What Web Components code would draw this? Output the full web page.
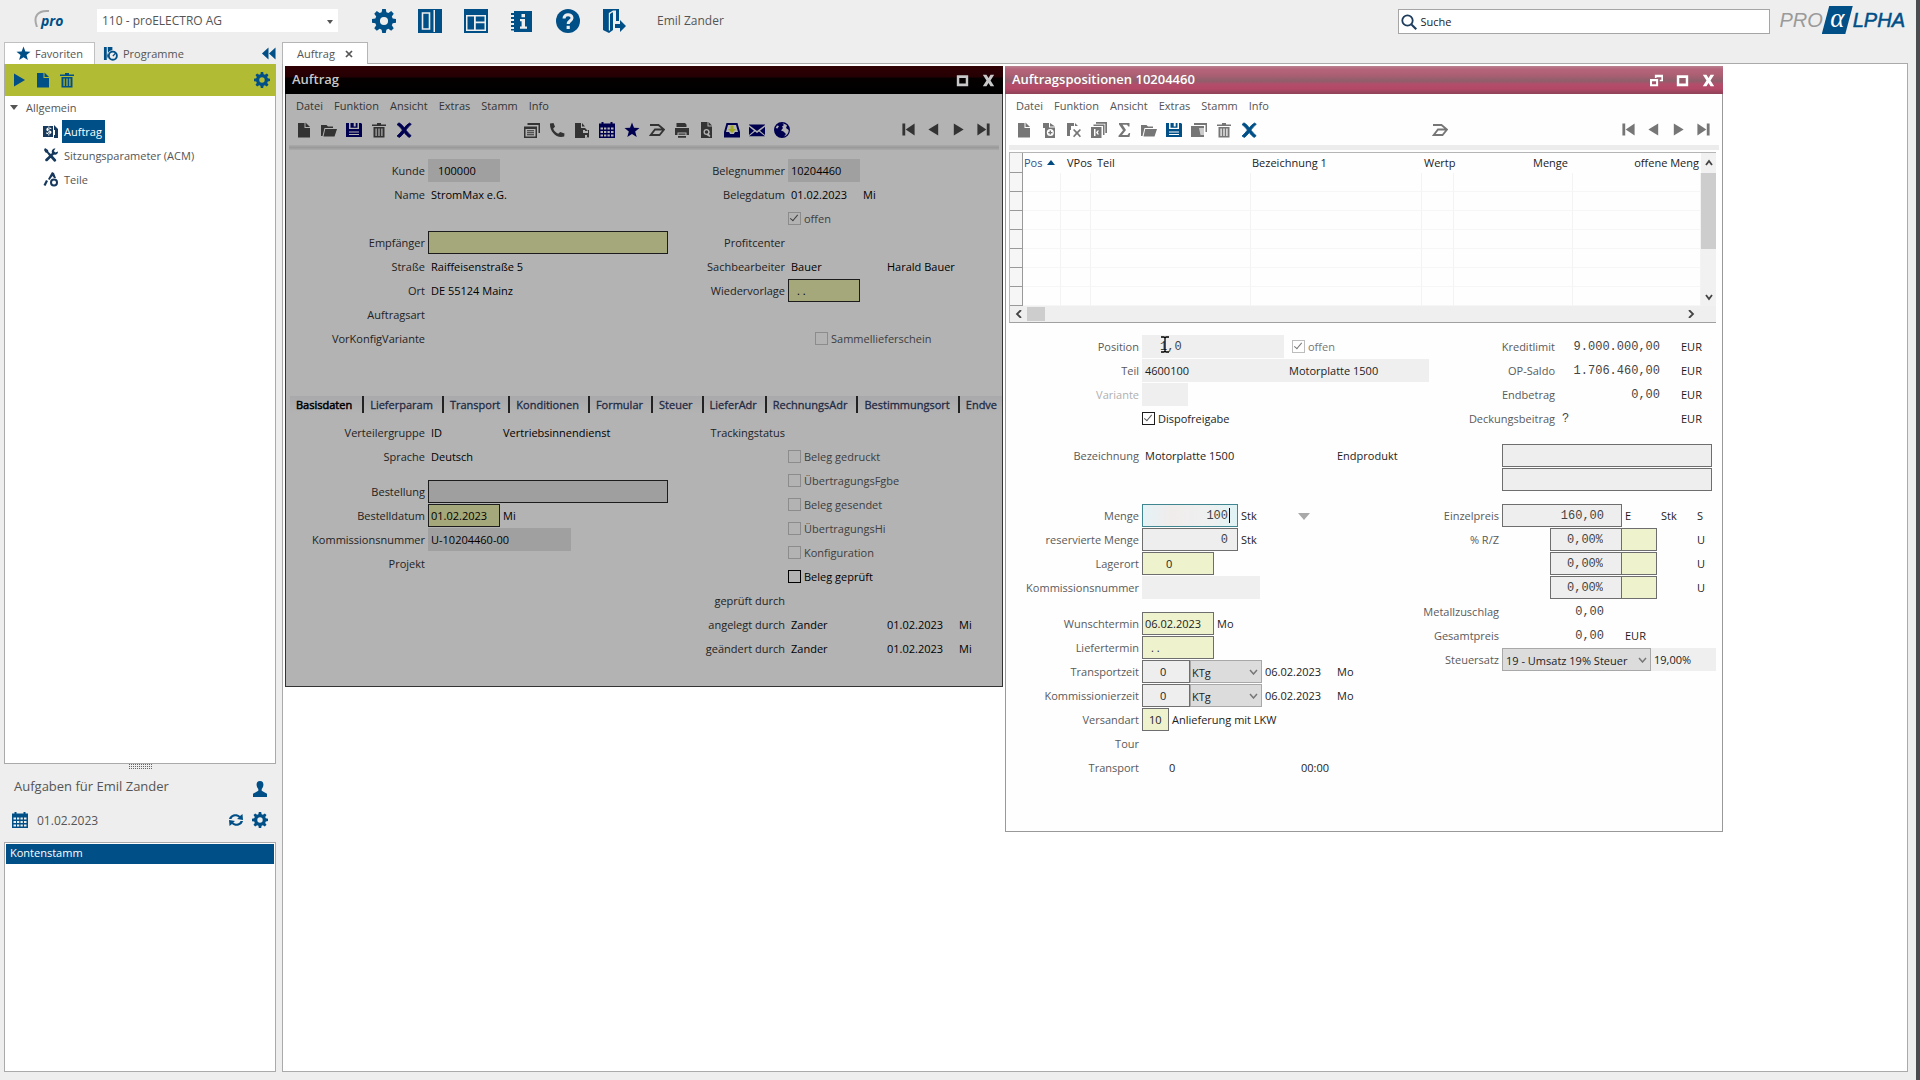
<!DOCTYPE html>
<html lang="de">
<head>
<meta charset="utf-8">
<title>proALPHA – Auftrag</title>
<style>
  html, body { height: 100%; }
  body { margin: 0; background: #eeeeee; font-family: "Open Sans", "Noto Sans", sans-serif; font-size: 11px; color: #444; }
</style>
</head>
<body>
<pa-app></pa-app>

<script>
const BASE = `
  *, *::before, *::after { box-sizing: border-box; }
  button { appearance: none; border: 0; background: none; padding: 0; margin: 0; font: inherit; color: inherit; display: inline-flex; align-items: center; justify-content: center; cursor: default; }
`;

function define(name, html, setup) {
  const tpl = document.createElement('template');
  customElements.define(name, class extends HTMLElement {
    connectedCallback() {
      if (this.shadowRoot) return;
      const root = this.attachShadow({ mode: 'open' });
      tpl.innerHTML = typeof html === 'function' ? html(this) : html;
      root.append(tpl.content.cloneNode(true));
      if (setup) setup(this, root);
    }
  });
}

/* ---------- icons, drawn on a 16 unit grid ---------- */
const GEAR = '<path fill-rule="evenodd" d="M6.8 0h2.4l.4 2.2 1.3.5 1.9-1.3 1.7 1.7-1.3 1.9.6 1.3 2.2.4v2.4l-2.2.4-.6 1.4 1.3 1.9-1.7 1.7-1.9-1.3-1.3.6-.4 2.2H6.8l-.4-2.2-1.3-.6-1.9 1.3-1.7-1.7 1.3-1.9-.6-1.4L0 9.200V6.700l2.200-.4.6-1.300-1.300-1.900 1.700-1.700 1.900 1.300 1.300-.5zM8 5.300a2.700 2.700 0 1 0 0 5.400 2.700 2.700 0 0 0 0-5.400z"/>';
const TRASH = '<path fill-rule="evenodd" d="M6 1h4v1.500h5V4H1V2.500h5zM2.500 5h11v10.500h-11zM4.500 6.500v7.500h1.200V6.500zM7.400 6.500v7.500h1.200V6.500zM10.300 6.500v7.500h1.200V6.500z"/>';
const PAGE = '<path d="M2 1h6.500v5H14v9.500H2z"/><path d="M9.500 0.500l4.500 4.500H9.500z"/>';
const ICONS = {
  gear: GEAR,
  trash: TRASH,
  page: PAGE,
  play: '<path d="M3 1.500l11 6.500-11 6.500z"/>',
  star: '<path d="M8 .5l2 5.300 5.500.2-4.300 3.500 1.500 5.500L8 11.900 3.300 15l1.500-5.500L.5 6l5.500-.2z"/>',
  book: '<path d="M0 0h24v24H0z"/><path fill="none" stroke="#eee" stroke-width="1.600" d="M4.500 4h7v16h-7z"/><path fill="#eee" d="M15.500 1H17v22h-1.500z"/>',
  layout: '<path d="M0 0h24v24H0z"/><path fill="#eee" d="M2 6h20v1.600H2zM2 6h1.500v16H2zM20.500 6H22v16h-1.500zM2 20.500h20V22H2zM10 6h1.800v16H10zM10 12.500h12v1.800H10z"/>',
  info: '<path d="M4 2h18v21H4zM1 4h5v2H1zM1 8h5v2H1zM1 12h5v2H1zM1 16h5v2H1zM1 20h5v1.500H1z"/><path fill="#eee" d="M11.500 5h3.500v3.200h-3.500zM10 10h5v7.500h2v2.200h-7v-2.200h1.600v-5.200H10z"/>',
  help: '<circle cx="12" cy="12" r="12"/><path fill="none" stroke="#eee" stroke-width="3" d="M8 9.500c0-5 8-5 8-.5 0 2.800-3.800 2.800-3.800 6"/><path fill="#eee" d="M10.600 16.800h3.200V20h-3.200z"/>',
  exit: '<path d="M1 0h16v3H11v18l-4 3-6-3z"/><path fill="#eee" d="M10 3.500l-2 1.500v16.500h-1.200V4L11 1.500h4V3z"/><path d="M14 1h3v11h-3zM13 15h5v-4l6 6-6 6v-4h-5z"/>',
  programs: '<path d="M1 1h3v14H1zM5 1h5v3.500A6 6 0 0 0 5.500 14z"/><path fill-rule="evenodd" d="M10.500 5a5.300 5.300 0 1 1 0 10.600 5.300 5.300 0 0 1 0-10.600zm0 2a3.300 3.300 0 1 0 0 6.600 3.300 3.300 0 0 0 0-6.600z"/><path d="M10 10.500l3-3.500 1 1-3 3.200z"/>',
  collapse: '<path d="M8 1.500v13L1 8zM15.500 1.500v13L8.500 8z"/>',
  order: '<path d="M0 3h10v11H0zM11 2l4 4v9h-4V12h1V7h-1z"/><path fill="#fff" d="M8.300 6.200V5.100c-1.400-.8-5-.9-5 1.300 0 2.300 3.600 1.500 3.600 2.800 0 1-2.100.8-3.600.1v1.500c1.800.7 5.200.7 5.200-1.700 0-2.200-3.600-1.700-3.600-2.700 0-.9 2-.7 3.400-.2zM5.300 3.500h1v9h-1z"/>',
  tools: '<path d="M2 1l3 2 .5 2L9 8l4 4.500c1 1-1 3-2 2L7 10 4 6 2.500 5.500 1 3zM15 4.500c.3 2-2 4-4 3L4.500 14c-1.200 1.200-3.300-.8-2-2L9 6c-1-3 1.500-5 3.500-4.500L10.800 4l1.500 1.500z"/>',
  parts: '<path d="M.5 14l2.500-5 2 1-2.500 5zM5 8l4-7 2 1 2 5h-2L9.500 5 6.500 9z"/><path fill-rule="evenodd" d="M11 7.500a4 4 0 1 1 0 8 4 4 0 0 1 0-8zm0 2a2 2 0 1 0 0 4 2 2 0 0 0 0-4z"/>',
  folder: '<path d="M0 3h5.500L7 4.500h5V6H3.500L1.500 14H0z"/><path d="M4.200 7H16l-2.500 7.500h-11z"/>',
  save: '<path fill-rule="evenodd" d="M0 1h3v6h10V1h2l1 1v13H0zM4.500 1h3.200v3.500h2V1h1.800v4.800h-7zM3 9.500v1h10v-1zM3 12v1h10v-1z"/>',
  cross: '<path d="M1 2.500L3 .8C5.200 2 7 4 8.300 5.800 9.800 3.800 11.500 2.200 13.500 1l1.800 1.300C13.200 4 11.300 6 9.900 8.100c1.400 1.900 3.200 3.900 5.300 5.600l-2 1.800c-1.900-1.300-3.600-3.100-5-5-1.400 1.900-3 3.700-4.800 5L1 14c2.100-1.800 4-3.800 5.400-5.900C5 6 3.200 4.100 1 2.500z" stroke="currentColor" stroke-width=".8"/>',
  list: '<path fill-rule="evenodd" d="M3.500 1H16v10h-1.500V3h-11zM0 4.500h13V16H0zM1.500 7v7.500h10V7z"/><path d="M3 8.200h7v1H3zM3 10.200h7v1H3zM3 12.200h7v1H3z"/>',
  phone: '<path d="M1 1.500L4.500 1 6 4.800 4.200 6.500c.7 2.300 2.500 4.200 5 5.200l2-1.700 4.300 1.500-.3 3C7.500 17 .5 9.500 1 1.500z"/>',
  pageinfo: '<path d="M1 1h6v5h4v2H9v3h2v5H1z"/><path d="M8 1l3 3.500H8zM11 6l3 3h-3zM14 8v3h-3v2h2v2h-2l4 .5V8z"/>',
  calendar: '<path fill-rule="evenodd" d="M2.500 0h2v1.500h7V0h2v1.500H16V16H0V1.500h2.500zM1.500 5.500v2H4v-2zM5 5.500v2h2.300v-2zM8.500 5.500v2h2.300v-2zM12 5.500v2h2.500v-2zM1.500 9v2H4V9zM5 9v2h2.300V9zM8.500 9v2h2.300V9zM12 9v2h2.500V9zM1.500 12.500v2H4v-2zM5 12.500v2h2.300v-2zM8.500 12.500v2h2.300v-2zM12 12.500v2h2.500v-2z"/>',
  scan: '<path fill="none" stroke="currentColor" stroke-width="1.800" d="M1 3h8.500l5.500 4.500L10.500 13H1.800L6 7.500h9"/>',
  print: '<path d="M4 1h7l1.500 1.500V5h-10V1zM1 6h14v7h-2.500v-2.500h-9V13H1zM4.500 11.500h7v1.300h-7zM4 14h8v1.800H4z"/>',
  pagefind: '<path fill-rule="evenodd" d="M2 0h6.500v4.500H13V16H2zM7.500 7a3 3 0 1 0 0 6l3 2 1-1-1.500-2a3 3 0 0 0-2.500-5zm0 1.300a1.700 1.700 0 1 1 0 3.400 1.700 1.700 0 0 1 0-3.400z"/><path d="M9.500 0L13 3.500H9.500z"/>',
  inbox: '<path fill-rule="evenodd" d="M2.500 1h11L16 10v5.500H0V10zM4 3L2 10h3l1.200 2h3.600L11 10h3l-2-7z"/><path fill="#a0a820" d="M6.500 3.500h3V7H12L8 11 4 7h2.500z"/>',
  mail: '<path d="M0 2.500h16V3l-8 6-8-6zM0 4.800l5 3.900L0 13zM16 4.800l-5 3.900 5 4.300zM0 14.300l6-4.900 2 1.500 2-1.500 6 4.900z"/>',
  globe: '<path fill-rule="evenodd" d="M8 0a8 8 0 1 1 0 16A8 8 0 0 1 8 0zm.5 1.500L10 3 8 4.500 9 6 7 8.500l2.500 1L12 12l-2 2.500c3-1 4.800-3.500 4.700-6.500L12 6l1-2.500C12 2.500 10.500 1.600 8.500 1.500zM3 3.500L1.700 6l1.800.5L5 4z"/>',
  first: '<path d="M1.500 1.500h3v13h-3zM14.500 1.500v13L5 8z"/>',
  prev: '<path d="M13 1.500v13L2.500 8z"/>',
  next: '<path d="M3 1.500v13L13.500 8z"/>',
  last: '<path d="M11.500 1.500h3v13h-3zM1.500 1.500v13L11 8z"/>',
  pageadd: '<path fill-rule="evenodd" d="M2 1h6v4.500h6V16H4V6H2zM9.300 7a3.500 3.500 0 1 0 0 7 3.500 3.500 0 0 0 0-7zM8.600 8.500H10v1.400h1.400v1.300H10v1.400H8.600v-1.400H7.200V9.900h1.400z"/><path d="M9 1l5 3.500H9z"/>',
  pagecut: '<path d="M1 1h7v3H5v4H4v6H1zM9 1l3 3H9z"/><path d="M7 8l1.200-1 2.800 2.800L13.800 7 15 8l-2.800 3 2.800 3.200-1.200 1-2.800-3-2.800 3-1.200-1L9.800 11z"/>',
  pagecopy: '<path fill-rule="evenodd" d="M5 0h11v11h-1.700V1.800H5zM2.500 2.500h11v10.500h-1.500V4h-9.500zM0 5h10.500v11H0zm3 2v7h1.500V7zm3.500 1.500L5 10.500 6.500 12.500H8L6.800 10.500 8 8.500z"/>',
  sigma: '<path d="M3 1h10.500v3.500h-1.200L11 2.800H6.500L10 8l-4 5h5.500l1.500-2h1.200l-.7 4H2.500v-1.300L7 8.300 3 2.500z"/>',
  folders: '<path d="M3 1h13v9h-1.500V3H3z"/><path d="M0 4h13v11H0z"/><path fill="#ccc" d="M8 6h5v7H9.500z"/>',
  person: '<path d="M8 0c4.500 0 4 5.500 1.700 8v1.800l5.300 3V16H1v-3.200l5.300-3V8C4 5.500 3.500 0 8 0z"/>',
  sync: '<path d="M1 7C2 2 9 .8 12 4l2.500-2 .5 6-6-1 1.800-1.600C8 3.400 4.500 4 3.500 7zM15 9c-1 5-8 6.200-11 3l-2.500 2L1 8l6 1-1.800 1.600C8 12.600 11.500 12 12.500 9z"/>',
  restore: '<path fill-rule="evenodd" d="M0 6h10v9H0zm2.500 3v3.500h5V9z"/><path d="M6 1h10v8h-4V7h2V4H8v1H6z"/>',
  max: '<path fill-rule="evenodd" d="M1 1.500h14v13.500H1zM4 4.800v7h8v-7z"/>',
  close: '<path d="M1 1h4.500L8 5l2.500-4H15l-4.500 7 4.500 7h-4.500L8 11l-2.500 4H1l4.500-7z"/>',
  lens: '<circle cx="6.500" cy="6.500" r="5.200" fill="none" stroke="currentColor" stroke-width="1.800"/><path d="M9.800 11.200l1.400-1.400 4.800 4.600-1.500 1.600z"/>',
  small: '<path fill="none" stroke="currentColor" stroke-width="3.500" d="M2 2l12 12M14 2L2 14"/>'
};
const BIG = new Set(['book', 'layout', 'info', 'help', 'exit']);

define('pa-icon', el => `
  <style>:host { display: inline-block; width: var(--size, 16px); height: var(--size, 16px); flex: none; }
  svg { display: block; width: 100%; height: 100%; fill: currentColor; }</style>
  <svg viewBox="0 0 ${BIG.has(el.getAttribute('name')) ? '24 24' : '16 16'}" aria-hidden="true">${ICONS[el.getAttribute('name')] || ''}</svg>`);

/* ---------- form parts ---------- */
define('pa-field', el => {
  const has = el.hasAttribute('value');
  const label = el.getAttribute('label') || '';
  return `
  <style>${BASE}
    :host { display: flex; align-items: flex-start; height: 24px; line-height: 23px; white-space: nowrap; }
    .label { width: var(--label-w); flex: none; margin-right: 3px; display: flex; justify-content: flex-end; color: var(--label); }
    :host([off]) .label { color: #b0b0b0; }
    input { height: 23px; width: var(--w, 72px); margin: 0 0 0 var(--lead, 0px); padding: 0 2px; border: 1px solid var(--line); border-radius: 0; background: var(--grey); font: inherit; color: var(--ink); outline: 0; flex: none; padding-left: var(--pl, 2px); }
    input.flat { border: 0; padding-left: var(--pl, 3px); }
    input.yellow { background: var(--yellow); }
    input.mono { font-family: "Liberation Mono", monospace; font-size: 12px; padding-top: 2px; color: #444; }
    input.right { text-align: right; padding-right: var(--pr, 9px); }
    input.focus { border-color: #3f8690; background: linear-gradient(90deg, #e4f2f5, #f1ecec 30%, #eef0f0 70%, #e0f3f5); }
    ::slotted(span) { min-width: var(--w, 0px); padding-left: 3px; color: var(--ink); flex: none; }
    ::slotted(.num) { font-family: "Liberation Mono", monospace; font-size: 12px; text-align: right; padding-right: 18px; padding-top: 1px; color: #444; }
    ::slotted(.numl) { font-family: "Liberation Mono", monospace; font-size: 12px; padding-left: 4px; padding-top: 1px; color: #444; }
    ::slotted(.tint) { background: var(--flat); height: 23px; }
    ::slotted(input) { height: 23px; width: 36px; margin: 0 0 0 -1px; box-sizing: border-box; border: 1px solid var(--line); background: var(--yellow); flex: none; }
    .box { position: relative; display: flex; }
    .caret { position: absolute; right: 8px; top: 4px; width: 1px; height: 15px; background: #000; }
    .beam { position: absolute; left: 19px; top: 1px; width: 8px; height: 17px; }
  </style>
  ${has
    ? `<label class="label" for="i">${label}</label><span class="box"><input id="i" class="${el.getAttribute('tone') || ''}" value="${el.getAttribute('value')}" ${el.hasAttribute('ro') ? 'readonly' : ''}>${el.hasAttribute('caret') ? '<span class="caret"></span>' : ''}${el.hasAttribute('beam') ? '<svg class="beam" viewBox="0 0 8 17"><path d="M0 1h3l1 1 1-1h3M0 16h3l1-1 1 1h3M4 2v13" fill="none" stroke="#000" stroke-width="1.300"/></svg>' : ''}</span>`
    : `<span class="label">${label}</span>`}
  <slot></slot>`;
});

define('pa-check', el => `
  <style>${BASE}
    :host { display: flex; height: 23px; align-items: center; margin-left: var(--lead, 0px); }
    label { display: flex; align-items: center; gap: 3px; color: var(--ink); }
    :host([off]) label { color: var(--off); }
    input { appearance: none; width: 13px; height: 13px; margin: 0; border: 1px solid var(--ink); position: relative; flex: none; }
    :host([off]) input { border-color: var(--offline); }
    input:checked::before { content: ""; position: absolute; left: 3px; top: 0; width: 4px; height: 8px; border: solid var(--label); border-width: 0 1px 1px 0; transform: rotate(40deg); }
    :host([off]) input:checked::before { border-color: var(--off); }
  </style>
  <label><input type="checkbox" ${el.hasAttribute('checked') ? 'checked' : ''} ${el.hasAttribute('off') ? 'disabled' : ''}><slot></slot></label>`);

define('pa-select', el => `
  <style>${BASE}
    :host { display: flex; position: relative; width: var(--w); flex: none; height: var(--h, 23px); }
    select { appearance: none; width: 100%; height: 100%; border: 1px solid var(--edge, #a8a8a8); border-radius: 0; background: var(--fill, #dcdcdc); font: inherit; color: inherit; padding: 0 16px 0 var(--pl, 4px); margin: 0; opacity: 1; }
    svg { position: absolute; right: 4px; top: 50%; width: 9px; height: 6px; margin-top: -3px; fill: none; stroke: #777; stroke-width: 1.500; pointer-events: none; }
    .solid { fill: #555; stroke: none; width: 6px; height: 4px; margin-top: -1px; right: 5px; }
  </style>
  <select aria-label="${el.getAttribute('name')}"><option>${el.getAttribute('value')}</option></select>
  ${el.hasAttribute('solid') ? '<svg class="solid" viewBox="0 0 6 4"><path d="M0 0h6L3 4z"/></svg>' : '<svg viewBox="0 0 9 6"><path d="M1 1l3.500 4L8 1"/></svg>'}`);

/* ---------- window frame ---------- */
define('pa-window', el => {
  const tools = (el.getAttribute('tools') || '').split(' ').filter(Boolean);
  const mid = (el.getAttribute('mid') || '').split(' ').filter(Boolean);
  const strong = new Set((el.getAttribute('strong') || '').split(' '));
  const btn = n => `<button aria-label="${n}" class="${strong.has(n) ? 's' : ''}"><pa-icon name="${n}"></pa-icon></button>`;
  return `
  <style>${BASE}
    :host { display: flex; flex-direction: column; width: 718px; border: 1px solid var(--frame); border-top: 0; background: var(--paper); flex: none; }
    header { display: flex; align-items: center; height: 28px; margin: 0 -1px; padding: 0 8px 0 7px; background: var(--title); color: var(--title-ink); }
    h2 { margin: 0; flex: 1; font-size: 13px; font-weight: 600; line-height: 24px; height: 26px; }
    header div { display: flex; gap: 13px; --size: 13px; }
    nav { display: flex; height: 22px; padding: 0 10px; align-items: center; gap: 11px; color: var(--menu); }
    .bar { display: flex; align-items: center; height: 27px; margin-bottom: 2px; padding: 0 6px 0 5px; color: var(--tool); --size: 16px; }
    .bar div { display: flex; }
    .bar button { width: 25px; height: 25px; }
    .mid { margin-left: var(--mid-gap); }
    .bar div:last-child { margin-left: auto; --size: 15px; }
    .s { color: var(--strong); }
    hr { width: calc(100% - 6px); height: 5px; border: 0; margin: 0 3px; background: var(--rule); }
  </style>
  <header><h2>${el.getAttribute('heading')}</h2><div>${el.hasAttribute('restore') ? '<button aria-label="Wiederherstellen"><pa-icon name="restore"></pa-icon></button>' : ''}<button aria-label="Maximieren"><pa-icon name="max"></pa-icon></button><button aria-label="Schließen"><pa-icon name="close"></pa-icon></button></div></header>
  <nav>${['Datei', 'Funktion', 'Ansicht', 'Extras', 'Stamm', 'Info'].map(t => `<button>${t}</button>`).join('')}</nav>
  <div class="bar"><div>${tools.map(btn).join('')}</div><div class="mid">${mid.map(btn).join('')}</div><div>${['first', 'prev', 'next', 'last'].map(btn).join('')}</div></div>
  <hr>
  <slot></slot>`;
});

/* ---------- order form ---------- */
define('pa-order-form', `
  <style>${BASE}
    :host { display: block; padding: 9px 0 25px 1px; }
    .cols { display: grid; grid-template-columns: 382px 1fr; }
    .a { --label-w: 138px; } .b { --label-w: 116px; }
    .skip { height: 24px; } .gap { height: 11px; }
    .tabs { display: flex; margin: 45px 0 8px 3px; overflow: hidden; height: 17px; align-items: center; color: #1f2a44; background: linear-gradient(#a9a9ab, #b3b3b3); -webkit-text-stroke: .3px #1f2a44; }
    .tabs button { padding: 0 8px 0 6px; height: 17px; border-left: 2px solid #222; flex: none; white-space: nowrap; }
    .tabs button:first-child { border: 0; padding-right: 10px; color: #000; -webkit-text-stroke: .5px #000; }
    .tabs button:nth-child(even) { padding-right: 9px; }
  </style>
  <section class="cols">
    <div class="a">
      <pa-field label="Kunde" value="100000" tone="flat" ro style="--pl:10px;--grey:var(--flat)"></pa-field>
      <pa-field label="Name"><span>StromMax e.G.</span></pa-field>
      <div class="skip"></div>
      <pa-field label="Empfänger" value="" tone="yellow" style="--w:240px"></pa-field>
      <pa-field label="Straße"><span>Raiffeisenstraße 5</span></pa-field>
      <pa-field label="Ort"><span>DE 55124 Mainz</span></pa-field>
      <pa-field label="Auftragsart"></pa-field>
      <pa-field label="VorKonfigVariante"></pa-field>
    </div>
    <div class="b">
      <pa-field label="Belegnummer" value="10204460" tone="flat" ro style="--grey:var(--flat)"></pa-field>
      <pa-field label="Belegdatum"><span style="--w:72px">01.02.2023</span><span>Mi</span></pa-field>
      <pa-field><pa-check checked off>offen</pa-check></pa-field>
      <pa-field label="Profitcenter"></pa-field>
      <pa-field label="Sachbearbeiter"><span style="--w:96px">Bauer</span><span>Harald Bauer</span></pa-field>
      <pa-field label="Wiedervorlage" value=". ." tone="yellow" style="--pl:8px"></pa-field>
      <div class="skip"></div>
      <pa-field><pa-check off style="--lead:27px">Sammellieferschein</pa-check></pa-field>
    </div>
  </section>
  <div class="tabs"><button>Basisdaten</button><button>Lieferparam</button><button>Transport</button><button>Konditionen</button><button>Formular</button><button>Steuer</button><button>LieferAdr</button><button>RechnungsAdr</button><button>Bestimmungsort</button><button>Endve</button></div>
  <section class="cols">
    <div class="a">
      <pa-field label="Verteilergruppe"><span style="--w:72px">ID</span><span>Vertriebsinnendienst</span></pa-field>
      <pa-field label="Sprache"><span>Deutsch</span></pa-field>
      <div class="gap"></div>
      <pa-field label="Bestellung" value="" style="--w:240px"></pa-field>
      <pa-field label="Bestelldatum" value="01.02.2023" tone="yellow"><span>Mi</span></pa-field>
      <pa-field label="Kommissionsnummer" value="U-10204460-00" tone="flat" ro style="--w:143px;--grey:var(--flat)"></pa-field>
      <pa-field label="Projekt"></pa-field>
    </div>
    <div class="b">
      <pa-field label="Trackingstatus"></pa-field>
      <pa-field><pa-check off>Beleg gedruckt</pa-check></pa-field>
      <pa-field><pa-check off>ÜbertragungsFgbe</pa-check></pa-field>
      <pa-field><pa-check off>Beleg gesendet</pa-check></pa-field>
      <pa-field><pa-check off>ÜbertragungsHi</pa-check></pa-field>
      <pa-field><pa-check off>Konfiguration</pa-check></pa-field>
      <pa-field><pa-check>Beleg geprüft</pa-check></pa-field>
      <pa-field label="geprüft durch"></pa-field>
      <pa-field label="angelegt durch"><span style="--w:96px">Zander</span><span style="--w:72px">01.02.2023</span><span>Mi</span></pa-field>
      <pa-field label="geändert durch"><span style="--w:96px">Zander</span><span style="--w:72px">01.02.2023</span><span>Mi</span></pa-field>
    </div>
  </section>`);

/* ---------- positions grid ---------- */
define('pa-positions', `
  <style>${BASE}
    :host { display: block; margin: 2px 6px 0 3px; border-bottom: 1px solid #a0a0a0; border-top: 1px solid #b5b5b5; border-left: 1px solid #bbb; }
    .top { display: flex; }
    .view { flex: 1; }
    table { width: 100%; table-layout: fixed; border-collapse: separate; border-spacing: 0; color: #222; }
    th { font-weight: 400; text-align: left; height: 20px; padding: 0 0 0 1px; white-space: nowrap; line-height: 18px; }
    th.r { text-align: right; padding-right: 5px; }
    th:nth-child(3) { padding-left: 6px; } th:nth-child(4) { padding-left: 6px; }
    th:nth-child(6) { padding-left: 2px; }
    th:nth-child(8) { padding-right: 2px; }
    td { height: 19px; padding: 0; border-bottom: 1px solid #f6f6f6; border-right: 1px solid #f3f3f3; }
    th:first-child, td:first-child { border-right: 1px solid #999; border-bottom: 1px solid #999; background: #f6f6f6; }
    .sort { color: #33508a; }
    .sort i { display: inline-block; border: 4px solid transparent; border-bottom: 5px solid #004a80; border-top: 0; margin: 0 0 2px 5px; }
    .v { width: 15px; background: #f1f1f1; display: flex; flex-direction: column; }
    .v button { height: 20px; } .v div { height: 76px; background: #cdcdcd; } .v button:last-child { margin-top: auto; height: 18px; }
    .h { display: flex; align-items: center; height: 16px; background: #efefef; padding: 0 19px 0 3px; }
    .h button { width: 12px; } .h div { width: 18px; height: 14px; background: #cdcdcd; margin-left: 2px; } .h button:last-child { margin-left: auto; }
    svg { width: 8px; height: 8px; fill: none; stroke: #444; stroke-width: 1.800; }
  </style>
  <div class="top">
    <div class="view"><table>
      <colgroup><col style="width:13px"><col style="width:38px"><col style="width:30px"><col style="width:160px"><col style="width:171px"><col style="width:32px"><col style="width:119px"><col></colgroup>
      <thead><tr><th></th><th class="sort">Pos<i></i></th><th>VPos</th><th>Teil</th><th>Bezeichnung 1</th><th>Wertp</th><th class="r">Menge</th><th class="r">offene Meng</th></tr></thead>
      <tbody></tbody>
    </table></div>
    <div class="v"><button aria-label="Hoch"><svg viewBox="0 0 8 8"><path d="M1 6l3-4 3 4"/></svg></button><div></div><button aria-label="Runter"><svg viewBox="0 0 8 8"><path d="M1 2l3 4 3-4"/></svg></button></div>
  </div>
  <div class="h"><button aria-label="Links"><svg viewBox="0 0 8 8"><path d="M6 0L2 4l4 4"/></svg></button><div></div><button aria-label="Rechts"><svg viewBox="0 0 8 8"><path d="M2 0l4 4-4 4"/></svg></button></div>`,
  (el, root) => {
    root.querySelector('tbody').innerHTML = ('<tr>' + '<td></td>'.repeat(8) + '</tr>').repeat(7);
  });

/* ---------- position form ---------- */
define('pa-position-form', `
  <style>${BASE}
    :host { display: block; padding: 12px 0 39px 1px; }
    .sec { display: grid; grid-template-columns: 405px 1fr; margin-bottom: 12px; }
    .sec.wide { grid-template-columns: 426px 1fr; margin-bottom: 13px; }
    .a { --label-w: 132px; } .b { --label-w: 87px; } .wide .b { --label-w: 122px; }
    .gap { height: 12px; }
    .tri { margin-top: 9px; border: 6px solid transparent; border-top: 7px solid #a9a9a9; border-bottom: 0; height: 0; }
    pa-select { color: #222; }
  </style>
  <section class="sec wide">
    <div class="a">
      <pa-field label="Position" value="1,0" tone="flat mono" beam ro style="--w:142px;--pl:18px;--grey:var(--flat)"><pa-check checked off style="--lead:8px">offen</pa-check></pa-field>
      <pa-field label="Teil"><span class="tint" style="--w:144px">4600100</span><span class="tint" style="--w:143px">Motorplatte 1500</span></pa-field>
      <pa-field off label="Variante" value="" tone="flat" ro style="--w:46px;--grey:var(--flat)"></pa-field>
      <pa-field><pa-check checked>Dispofreigabe</pa-check></pa-field>
    </div>
    <div class="b">
      <pa-field label="Kreditlimit"><span class="num" style="--w:120px">9.000.000,00</span><span>EUR</span></pa-field>
      <pa-field label="OP-Saldo"><span class="num" style="--w:120px">1.706.460,00</span><span>EUR</span></pa-field>
      <pa-field label="Endbetrag"><span class="num" style="--w:120px">0,00</span><span>EUR</span></pa-field>
      <pa-field label="Deckungsbeitrag"><span class="numl" style="--w:120px">?</span><span>EUR</span></pa-field>
    </div>
  </section>
  <section class="sec">
    <div class="a"><pa-field label="Bezeichnung"><span style="--w:192px">Motorplatte 1500</span><span>Endprodukt</span></pa-field></div>
    <div class="b"><pa-field value="" style="--w:210px"></pa-field><pa-field value="" style="--w:210px"></pa-field></div>
  </section>
  <section class="sec">
    <div class="a">
      <pa-field label="Menge" value="100" tone="mono right focus" caret style="--w:96px"><span style="--w:60px">Stk</span><i class="tri"></i></pa-field>
      <pa-field label="reservierte Menge" value="0" tone="mono right" style="--w:96px"><span>Stk</span></pa-field>
      <pa-field label="Lagerort" value="0" tone="yellow" style="--pl:23px"></pa-field>
      <pa-field label="Kommissionsnummer" value="" tone="flat" ro style="--w:118px;--grey:var(--flat)"></pa-field>
      <div class="gap"></div>
      <pa-field label="Wunschtermin" value="06.02.2023" tone="yellow"><span>Mo</span></pa-field>
      <pa-field label="Liefertermin" value=". ." tone="yellow" style="--pl:8px"></pa-field>
      <pa-field label="Transportzeit" value="0" style="--w:48px;--pl:17px"><pa-select name="Einheit Transportzeit" value="KTg" style="--w:72px;--pl:1px"></pa-select><span style="--w:72px">06.02.2023</span><span>Mo</span></pa-field>
      <pa-field label="Kommissionierzeit" value="0" style="--w:48px;--pl:17px"><pa-select name="Einheit Kommissionierzeit" value="KTg" style="--w:72px;--pl:1px"></pa-select><span style="--w:72px">06.02.2023</span><span>Mo</span></pa-field>
      <pa-field label="Versandart" value="10" tone="yellow" style="--w:27px;--pl:6px"><span>Anlieferung mit LKW</span></pa-field>
      <pa-field label="Tour"></pa-field>
      <pa-field label="Transport"><span style="--w:24px"></span><span style="--w:132px">0</span><span>00:00</span></pa-field>
    </div>
    <div class="b">
      <pa-field label="Einzelpreis" value="160,00" tone="mono right" style="--w:120px;--pr:17px"><span style="--w:36px">E</span><span style="--w:36px">Stk</span><span>S</span></pa-field>
      <pa-field label="% R/Z" value="0,00%" tone="mono right" style="--lead:48px;--pr:18px"><input aria-label="Art 1"><span style="--w:37px"></span><span>U</span></pa-field>
      <pa-field value="0,00%" tone="mono right" style="--lead:48px;--pr:18px"><input aria-label="Art 2"><span style="--w:37px"></span><span>U</span></pa-field>
      <pa-field value="0,00%" tone="mono right" style="--lead:48px;--pr:18px"><input aria-label="Art 3"><span style="--w:37px"></span><span>U</span></pa-field>
      <pa-field label="Metallzuschlag"><span class="num" style="--w:120px">0,00</span></pa-field>
      <pa-field label="Gesamtpreis"><span class="num" style="--w:120px">0,00</span><span>EUR</span></pa-field>
      <pa-field label="Steuersatz"><pa-select name="Steuersatz" value="19 - Umsatz 19% Steuer" style="--w:149px;--pl:3px"></pa-select><span class="tint" style="--w:65px">19,00%</span></pa-field>
    </div>
  </section>`);

/* ---------- shell ---------- */
define('pa-topbar', `
  <style>${BASE}
    :host { display: flex; align-items: flex-start; height: 42px; padding: 9px 0 0 34px; }
    .pro { position: relative; width: 63px; height: 24px; padding-left: 7px; color: #004f87; font: italic 700 14px/23px "Open Sans", sans-serif; }
    .pro svg { position: absolute; left: 0; top: 0; width: 16px; height: 18px; }
    pa-select { --w: 241px; --h: 23px; --fill: #fff; --edge: #fff; font-size: 12px; color: #555; }
    .icons { display: flex; gap: 22px; margin-left: 34px; color: #004f87; --size: 24px; }
    .user { margin-left: 31px; font-size: 12px; line-height: 23px; color: #555; flex: 1; }
    .search { display: flex; align-items: center; width: 372px; height: 25px; border: 1px solid #a5a5a5; background: #fff; color: #1d3c5c; padding-left: 2px; gap: 3px; }
    .search input { border: 0; outline: 0; background: none; font: inherit; flex: 1; padding: 0; height: 22px; }
    .search input::placeholder { color: #222; opacity: 1; }
    .logo { display: flex; margin: -3px 11px 0 9px; font: italic 400 20px/28px "Liberation Sans", sans-serif; color: #004f87; }
    .logo .p { color: #9a9a9a; }
    .logo .m { width: 31px; height: 28px; margin: 0 0 0 -1px; background: #004f87; clip-path: polygon(24% 0, 100% 0, 76% 100%, 0 100%); color: #fff; text-align: center; font: italic 400 27px/24px "Liberation Serif", serif; }
    .logo .l { -webkit-text-stroke: .5px #004f87; }
  </style>
  <div class="pro"><svg viewBox="0 0 16 18"><path d="M3 18C-1 8 3 1 15 2" fill="none" stroke="#a8a8a8" stroke-width="2"/></svg>pro</div>
  <pa-select name="Firma" value="110 - proELECTRO AG" solid></pa-select>
  <div class="icons">
    <button aria-label="Einstellungen"><pa-icon name="gear"></pa-icon></button><button aria-label="Navigation"><pa-icon name="book"></pa-icon></button><button aria-label="Layout"><pa-icon name="layout"></pa-icon></button><button aria-label="Info"><pa-icon name="info"></pa-icon></button><button aria-label="Hilfe"><pa-icon name="help"></pa-icon></button><button aria-label="Abmelden"><pa-icon name="exit"></pa-icon></button>
  </div>
  <div class="user">Emil Zander</div>
  <label class="search"><pa-icon name="lens"></pa-icon><input type="search" placeholder="Suche" aria-label="Suche"></label>
  <div class="logo"><span class="p">PRO</span><span class="m">α</span><span class="l">LPHA</span></div>`);

define('pa-sidebar', `
  <style>${BASE}
    :host { display: flex; flex-direction: column; width: 272px; color: #555; }
    .tabs { display: flex; height: 22px; line-height: 21px; }
    .tabs button { gap: 5px; padding: 0 8px; --size: 15px; }
    .tabs .on { background: #fff; border: 1px solid #c0c0c0; border-bottom: 0; width: 91px; gap: 4px; }
    .tabs pa-icon, .bar, .date pa-icon, .acts, .who pa-icon { color: #004f87; }
    .tabs .col { margin-left: auto; padding: 0; }
    .panel { flex: 1; border: 1px solid #aaa; border-top: 0; background: #fff; min-height: 0; }
    .bar { display: flex; gap: 8px; height: 32px; align-items: center; padding: 0 5px 0 6px; background: #b2bb34; --size: 16px; }
    .bar button:last-child { margin-left: auto; }
    ul { list-style: none; margin: 0; padding: 0; line-height: 24px; }
    .root { display: flex; align-items: center; height: 23px; gap: 8px; padding-left: 5px; }
    .root i { border: 4px solid transparent; border-top: 5px solid #555; border-bottom: 0; }
    li li { display: flex; align-items: center; height: 24px; padding-left: 38px; gap: 3px; color: #555; }
    li pa-icon { color: #16385c; --size: 16px; }
    li li a { color: inherit; text-decoration: none; padding: 0 3px 0 2px; line-height: 23px; }
    a.sel { background: #004f87; color: #fff !important; }
    .grip { width: 24px; height: 6px; margin: 0 auto; background: conic-gradient(#666 25%, transparent 0) 0 0 / 2px 2px; }
    .who, .date { display: flex; align-items: center; padding: 0 8px 0 10px; }
    .who { height: 28px; font-size: 13px; justify-content: space-between; margin-top: 2px; }
    .date { height: 41px; font-size: 12px; gap: 9px; margin-bottom: 1px; padding-left: 8px; padding-bottom: 1px; }
    .who pa-icon { margin-top: 6px; }
    .acts { margin-left: auto; display: flex; gap: 8px; }
    .list { height: 230px; border: 1px solid #aaa; background: #fff; padding: 0; }
    .list div { background: #004f87; color: #fff; height: 20px; line-height: 18px; padding-left: 4px; margin: 1px; }
  </style>
  <div class="tabs"><button class="on"><pa-icon name="star"></pa-icon>Favoriten</button><button><pa-icon name="programs"></pa-icon>Programme</button><button class="col" aria-label="Einklappen"><pa-icon name="collapse"></pa-icon></button></div>
  <div class="panel">
    <div class="bar"><button aria-label="Starten"><pa-icon name="play"></pa-icon></button><button aria-label="Neu"><pa-icon name="page"></pa-icon></button><button aria-label="Löschen"><pa-icon name="trash"></pa-icon></button><button aria-label="Optionen"><pa-icon name="gear"></pa-icon></button></div>
    <ul><li><span class="root"><i></i>Allgemein</span><ul>
      <li><pa-icon name="order"></pa-icon><a href="#" class="sel">Auftrag</a></li>
      <li><pa-icon name="tools"></pa-icon><a href="#">Sitzungsparameter (ACM)</a></li>
      <li><pa-icon name="parts"></pa-icon><a href="#">Teile</a></li>
    </ul></li></ul>
  </div>
  <div class="grip"></div>
  <div class="who"><span>Aufgaben für Emil Zander</span><pa-icon name="person"></pa-icon></div>
  <div class="date"><pa-icon name="calendar"></pa-icon><span>01.02.2023</span><div class="acts"><button aria-label="Aktualisieren"><pa-icon name="sync"></pa-icon></button><button aria-label="Optionen"><pa-icon name="gear"></pa-icon></button></div></div>
  <div class="list"><div>Kontenstamm</div></div>`);

define('pa-workspace', `
  <style>${BASE}
    :host { display: flex; flex-direction: column; flex: 1; min-width: 0; }
    .tabs { display: flex; height: 22px; position: relative; z-index: 1; margin-bottom: -1px; }
    .tabs button { width: 86px; gap: 10px; border: 1px solid #b5b5b5; border-bottom: 0; background: #fff; color: #555; line-height: 21px; --size: 8px; }
    .desk { flex: 1; border: 1px solid #aaa; background: #fff; padding: 2px; min-height: 0; }
    .row { display: flex; align-items: flex-start; gap: 2px; }
  </style>
  <div class="tabs"><button>Auftrag<pa-icon name="small"></pa-icon></button></div>
  <div class="desk"><div class="row"><slot></slot></div></div>`);

define('pa-app', `
  <style>${BASE}
    :host { display: flex; flex-direction: column; height: 100vh; border-right: 4px solid #4a4c50; box-sizing: border-box; overflow: hidden; }
    main { display: flex; flex: 1; min-height: 0; gap: 6px; padding: 0 8px 8px 4px; }
    .dim { --mid-gap: 103px; --paper: #b3b3b3; --frame: #333; --title: linear-gradient(#300004 0, #240003 11px, #050000 12px, #000); --title-ink: #c8c8c8;
      --menu: #333; --tool: #333; --strong: #000050; --rule: linear-gradient(#aaa, #9a9a9a 50%, #aaa);
      --label: #222; --ink: #000; --off: #3d3d3d; --offline: #8c8c8c; --line: #1c1c1c; --grey: #9f9f9f; --flat: #a0a0a0; --yellow: #a4a87a; }
    .lit { --mid-gap: 166px; --paper: #fefefe; --frame: #999; --title: linear-gradient(#b98391 0, #b5657c 3px, #af6074 8px, #8f5e6b 15px, #b24e6b 18px, #b24866 23px, #8c4257); --title-ink: #fff;
      --menu: #555; --tool: #767676; --strong: #004f87; --rule: #ececec;
      --label: #5a5a5a; --ink: #1c1c1c; --off: #777; --offline: #bdbdbd; --line: #6e6e6e; --grey: #eeeeee; --flat: #efefef; --yellow: #eef2cd; }
  </style>
  <pa-topbar></pa-topbar>
  <main>
    <pa-sidebar></pa-sidebar>
    <pa-workspace>
      <pa-window class="dim" heading="Auftrag" tools="page folder save trash cross" mid="list phone pageinfo calendar star scan print pagefind inbox mail globe" strong="save cross calendar star inbox mail globe"><pa-order-form></pa-order-form></pa-window>
      <pa-window class="lit" heading="Auftragspositionen 10204460" restore tools="page pageadd pagecut pagecopy sigma folder save folders trash cross" mid="scan" strong="save cross"><pa-positions></pa-positions><pa-position-form></pa-position-form></pa-window>
    </pa-workspace>
  </main>`);
</script>
</body>
</html>
